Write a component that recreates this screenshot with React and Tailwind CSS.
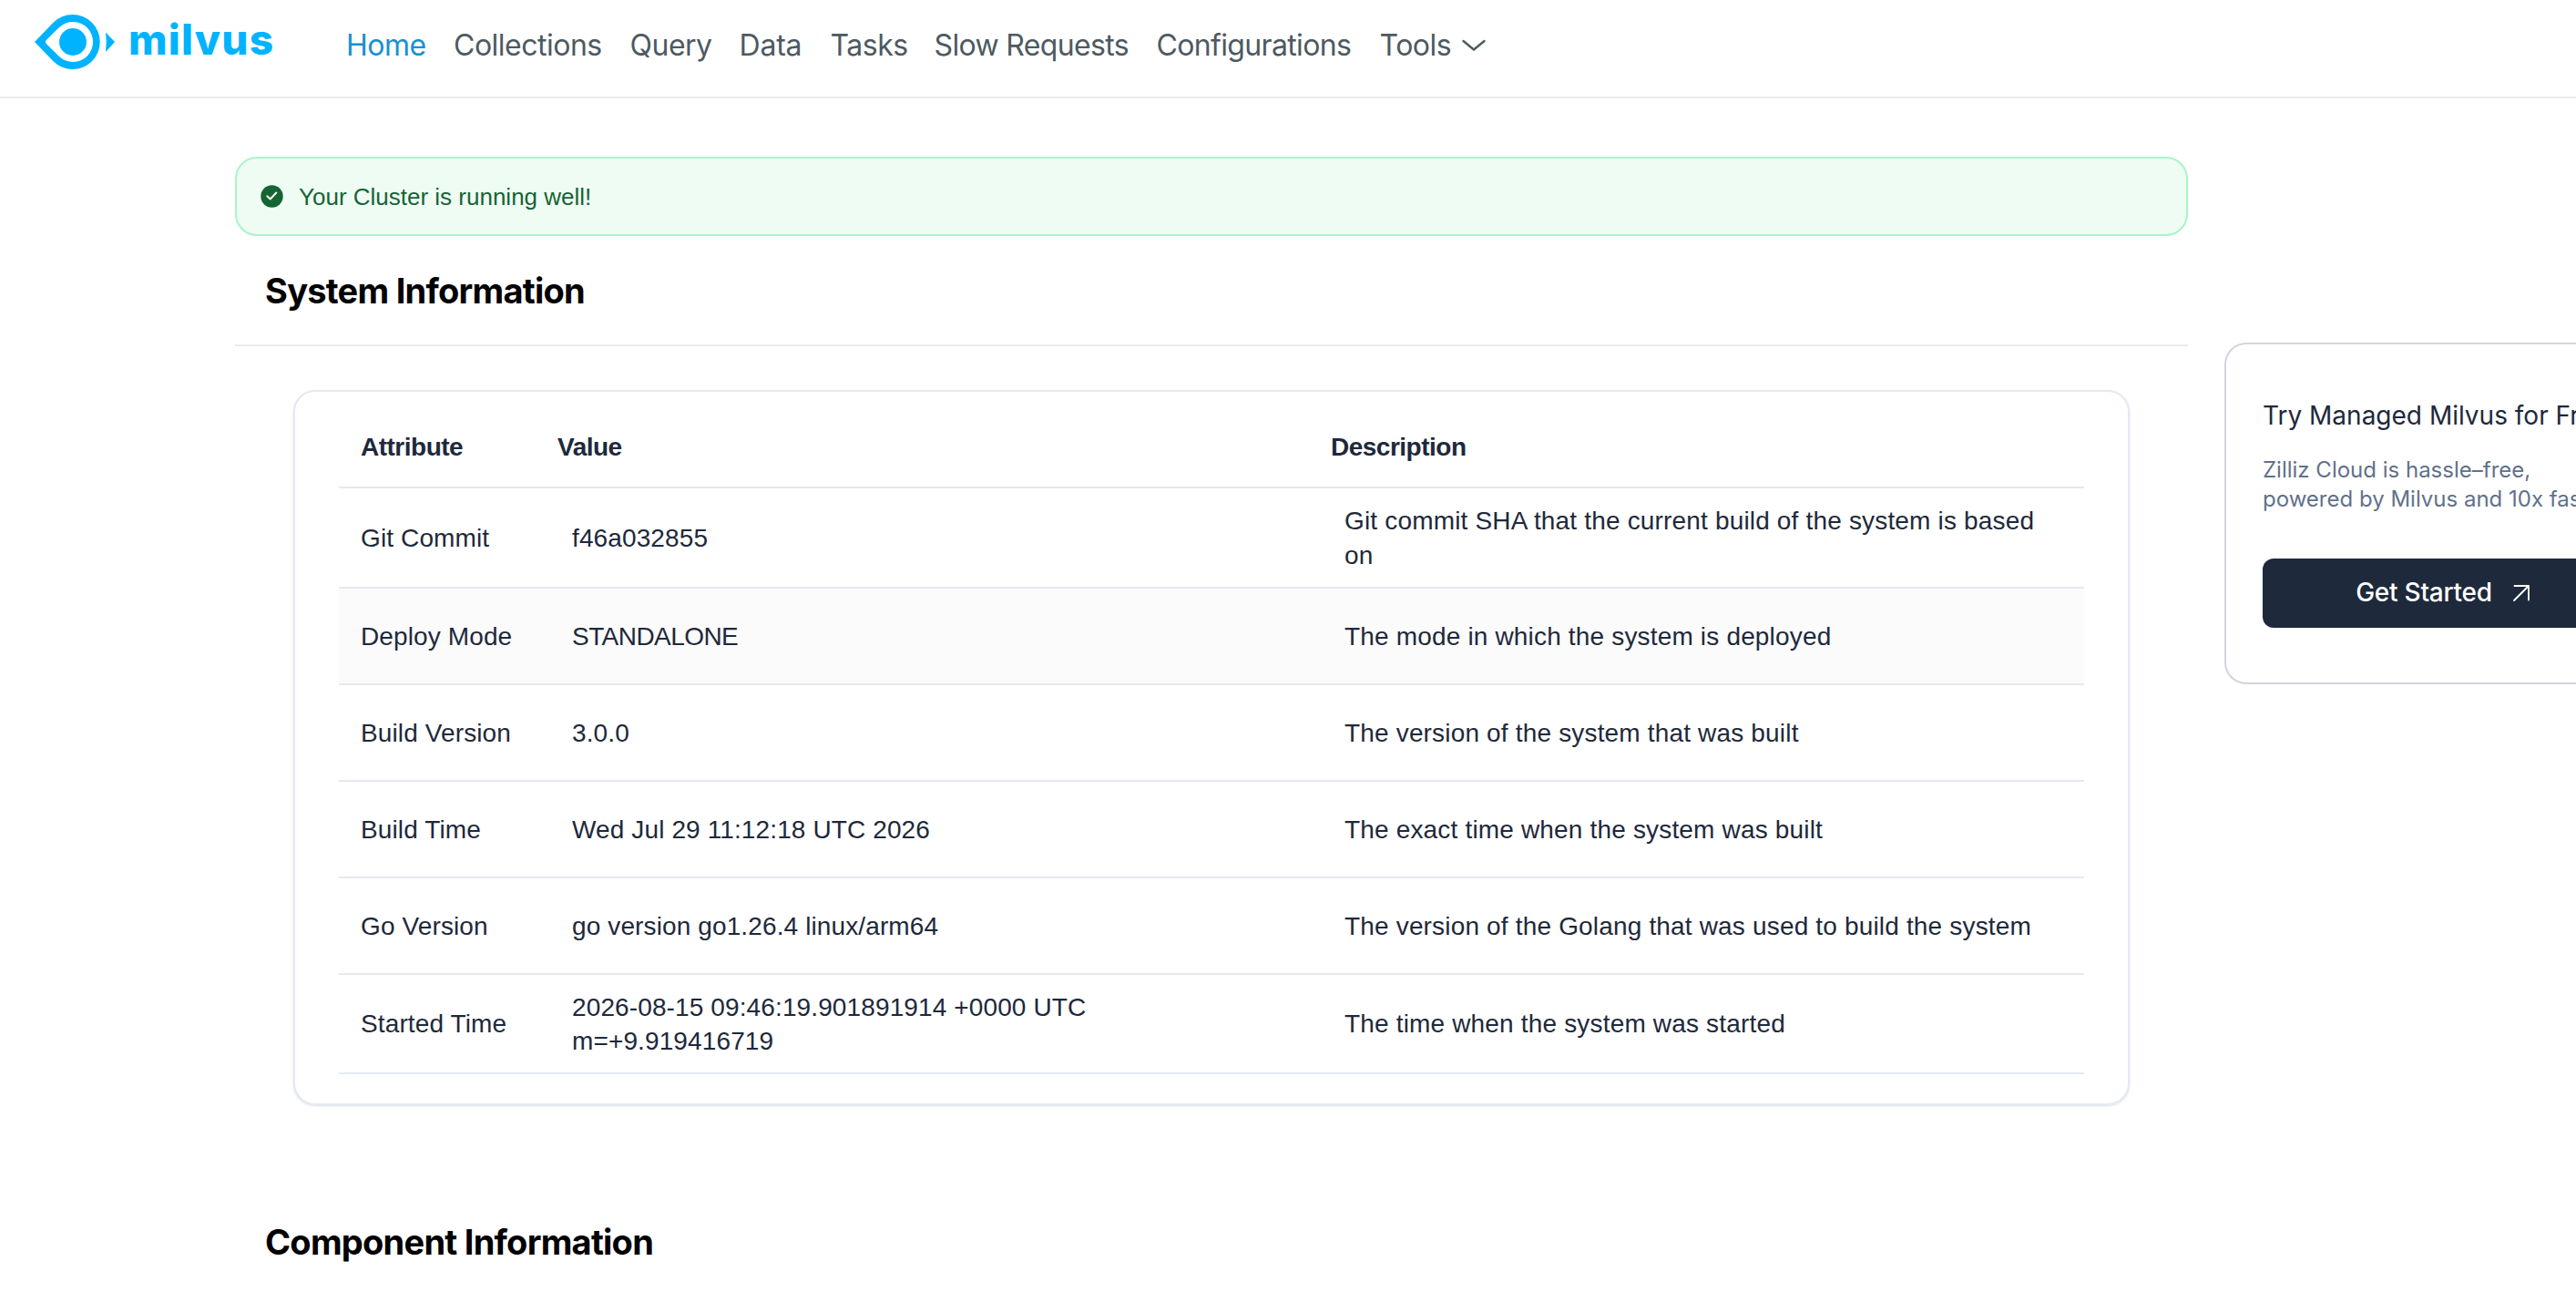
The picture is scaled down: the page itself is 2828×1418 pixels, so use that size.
const navItems = [
  { label: 'Home', className: 'w-[118px] text-[#1791ce]' },
  { label: 'Collections', className: 'w-[193.5px]' },
  { label: 'Query', className: 'w-[120px]' },
  { label: 'Data', className: 'w-[100px] tracking-[-0.2px]' },
  { label: 'Tasks', className: 'w-[114px]' },
  { label: 'Slow Requests', className: 'w-[244px] tracking-[-0.65px]' },
  { label: 'Configurations', className: 'w-[245px] tracking-[-0.65px]' },
];

const systemInfo = [
  {
    attribute: 'Git Commit',
    value: 'f46a032855',
    description: 'Git commit SHA that the current build of the system is based on',
    className: 'h-[110px]',
  },
  {
    attribute: 'Deploy Mode',
    value: 'STANDALONE',
    description: 'The mode in which the system is deployed',
    className: 'h-[106px] bg-[#fbfbfb]',
    valueClass: 'tracking-[-0.55px]',
  },
  {
    attribute: 'Build Version',
    value: '3.0.0',
    description: 'The version of the system that was built',
    className: 'h-[106px]',
  },
  {
    attribute: 'Build Time',
    value: 'Wed Jul 29 11:12:18 UTC 2026',
    description: 'The exact time when the system was built',
    className: 'h-[106px]',
  },
  {
    attribute: 'Go Version',
    value: 'go version go1.26.4 linux/arm64',
    description: 'The version of the Golang that was used to build the system',
    className: 'h-[106px]',
  },
  {
    attribute: 'Started Time',
    value: '2026-08-15 09:46:19.901891914 +0000 UTC m=+9.919416719',
    description: 'The time when the system was started',
    className: 'h-[109px]',
  },
];

const Logo = () => (
  <a href="#" className="flex h-[92px] w-[343px] items-center pl-[38px] text-[#00b3ff]">
    <svg width="89" height="60" viewBox="0 0 89 60" fill="currentColor">
      <path
        fillRule="evenodd"
        d="M0 30 L20.5 8.8 A30 30 0 1 1 20.5 51.2 Z M13 32.2 L27 46 A22 22 0 1 0 27 14 L13 27.8 Q11 30 13 32.2 Z"
      />
      <circle cx="42" cy="30" r="15" />
      <path d="M78 19.5 L88 30 L78 41 Q79.5 30 78 19.5 Z" />
    </svg>
    <span className="ml-[14px] pb-[7px] font-['Inter'] text-[46px] leading-none font-extrabold tracking-[1.2px]">
      milvus
    </span>
  </a>
);

const Header = () => (
  <header className="flex h-[108px] border-b-2 border-[#ebebeb]">
    <Logo />
    <nav className="flex h-[100px] items-center pl-[37px] font-['Inter'] text-[32px] tracking-[-0.5px] whitespace-nowrap text-[#4d5a61]">
      {navItems.map((item) => (
        <a key={item.label} href="#" className={item.className}>
          {item.label}
        </a>
      ))}
      <a href="#" className="flex items-center gap-3">
        Tools
        <svg width="26" height="14" viewBox="0 0 26 14" fill="none" stroke="currentColor" strokeWidth="2.4" strokeLinecap="round" strokeLinejoin="round">
          <path d="M1.5 2 L13 11.5 L24.5 2" />
        </svg>
      </a>
    </nav>
  </header>
);

const ClusterAlert = () => (
  <div className="flex h-[87px] items-center rounded-3xl border-2 border-[#a9f5c8] bg-[#effcf4] pl-[26px] text-[#166434]">
    <svg width="25" height="25" viewBox="0 0 25 25">
      <circle cx="12.5" cy="12.5" r="12.2" fill="currentColor" />
      <path d="M7.3 12.3 L10.7 15.5 L17.3 8.5" fill="none" stroke="#effcf4" strokeWidth="2" strokeLinecap="round" strokeLinejoin="round" />
    </svg>
    <span className="ml-[17px] pt-[2px] text-[26px]">Your Cluster is running well!</span>
  </div>
);

const SystemTable = () => (
  <div className="mx-16 mt-12 h-[785px] rounded-3xl border-2 border-[#e3e9f1] px-12 shadow-sm">
    <div className="grid h-[106px] grid-cols-[216px_849px_1fr] items-center border-b-2 border-[#e3e9f1] pt-[18px] pl-6 font-bold tracking-[-0.5px]">
      <span>Attribute</span>
      <span>Value</span>
      <span>Description</span>
    </div>
    {systemInfo.map((row) => (
      <div
        key={row.attribute}
        className={`grid grid-cols-[232px_848px_1fr] items-center border-b-2 border-[#e3e9f1] pt-px pl-6 tracking-[0.12px] ${row.className}`}
      >
        <span>{row.attribute}</span>
        <span className={`w-[600px] ${row.valueClass || ''}`}>{row.value}</span>
        <span className="pr-10 tracking-[0.17px]">{row.description}</span>
      </div>
    ))}
  </div>
);

const CloudCard = () => (
  <aside className="mt-[268px] ml-10 h-[375px] w-[480px] shrink-0 rounded-3xl border-2 border-[#d1d6dc] px-10 pt-[58px] font-['Inter'] whitespace-nowrap">
    <h3 className="text-[28px] leading-[40px]">Try Managed Milvus for Free</h3>
    <p className="mt-6 text-2xl leading-8 text-[#61718b]">
      Zilliz Cloud is hassle–free,
      <br />
      powered by Milvus and 10x faster.
    </p>
    <button className="mt-[49px] flex h-[76px] w-[396px] items-center justify-center rounded-xl bg-[#1e293b] text-[28px] font-medium tracking-[-0.25px] text-white">
      Get Started
      <svg className="ml-[22px]" width="20" height="20" viewBox="0 0 20 20" fill="none" stroke="currentColor" strokeWidth="1.8" strokeLinecap="round" strokeLinejoin="round">
        <path d="M2 18 L18 2 M2.5 2 H18 V17.5" />
      </svg>
    </button>
  </aside>
);

export default function App() {
  return (
    <div className="h-[1418px] w-full overflow-hidden bg-white font-['Liberation_Sans',sans-serif] text-[28px] leading-[37.33px] text-[#1e293b]">
      <Header />
      <div className="flex pl-[258px]">
        <main className="w-[2144px] shrink-0 pt-16">
          <ClusterAlert />
          <h2 className="flex h-[121px] items-center border-b-2 border-[#ebebeb] pt-[3px] pl-[33px] font-['Inter'] text-[38px] font-bold tracking-[-0.75px] text-black">
            System Information
          </h2>
          <SystemTable />
          <h2 className="mt-[132px] pl-[33px] font-['Inter'] text-[38px] font-bold tracking-[-0.75px] text-black">
            Component Information
          </h2>
        </main>
        <CloudCard />
      </div>
    </div>
  );
}
